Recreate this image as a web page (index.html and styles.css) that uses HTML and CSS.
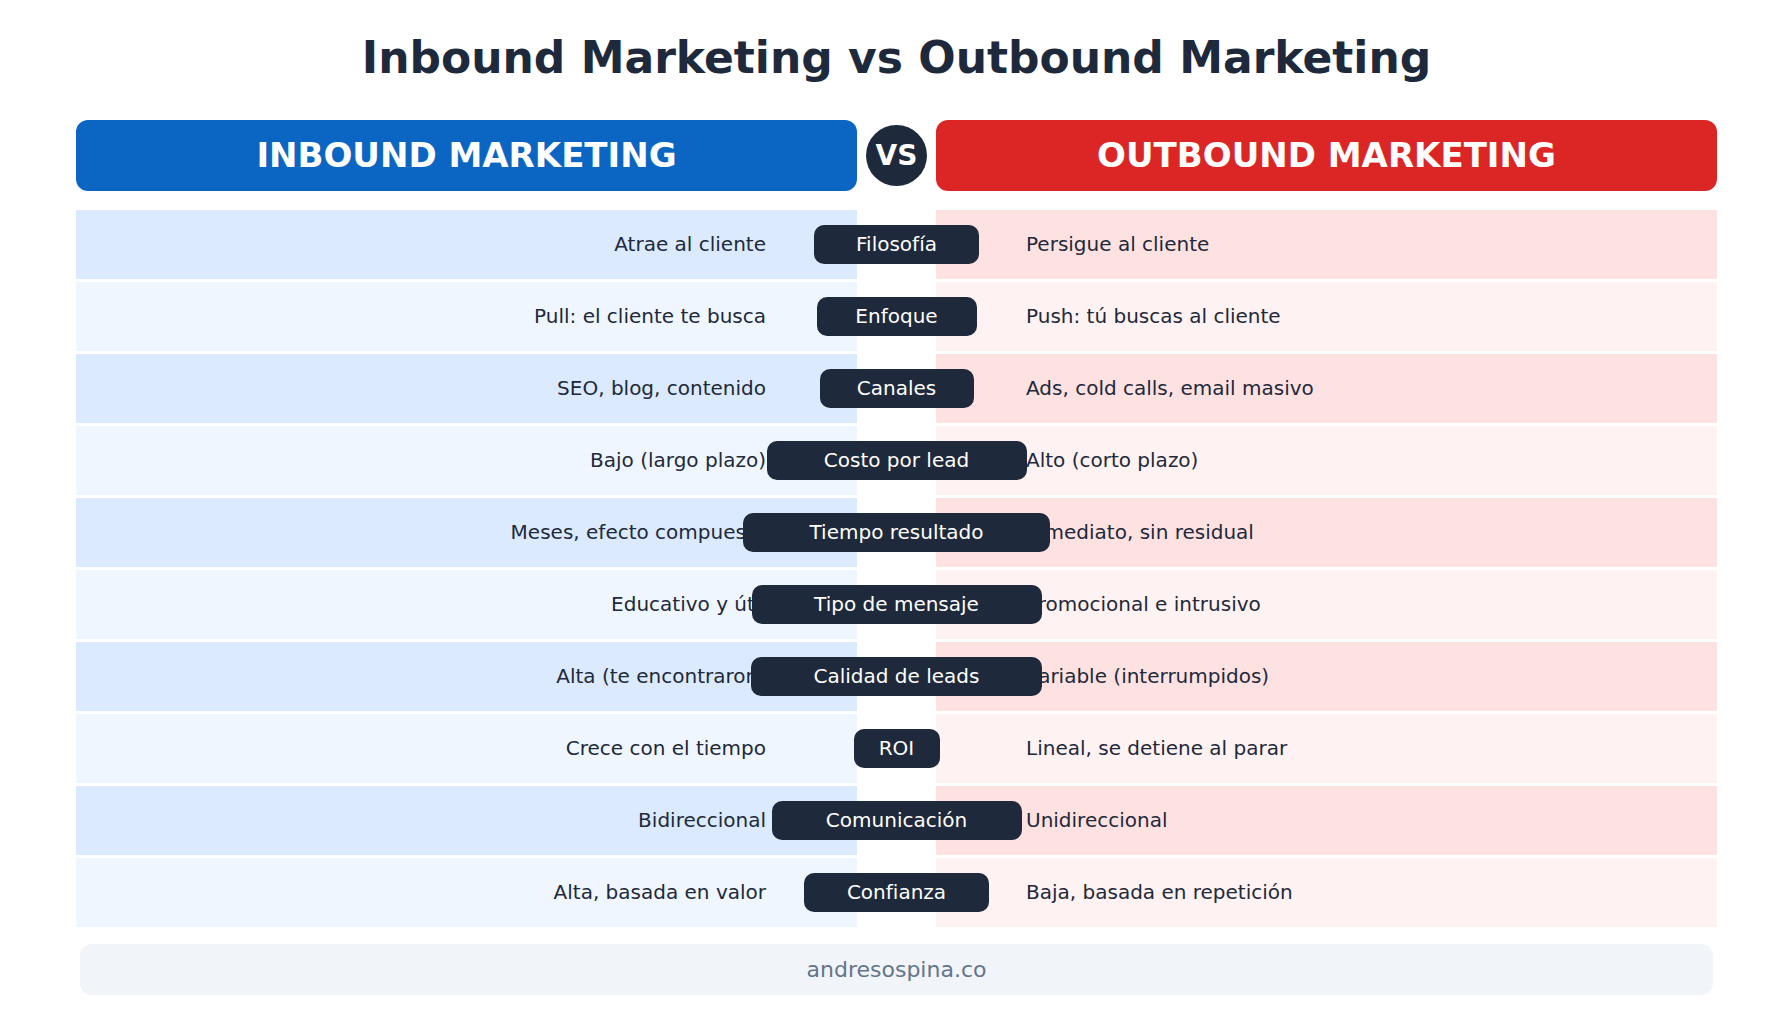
FILE: index.html
```html
<!DOCTYPE html>
<html lang="es">
<head>
<meta charset="utf-8">
<title>Inbound Marketing vs Outbound Marketing</title>
<link rel="stylesheet" href="styles.css">
</head>
<body>
<main class="page">
  <h1 class="title">Inbound Marketing vs Outbound Marketing</h1>
  <div class="board">
    <div class="head-row">
      <div class="head head-in">INBOUND MARKETING</div>
      <div class="vs-wrap"><div class="vs">VS</div></div>
      <div class="head head-out">OUTBOUND MARKETING</div>
    </div>
    <div class="rows">
      <div class="row odd">
        <div class="cell cell-in">Atrae al cliente</div>
        <div class="pill" style="width:165px">Filosofía</div>
        <div class="cell cell-out">Persigue al cliente</div>
      </div>
      <div class="row even">
        <div class="cell cell-in">Pull: el cliente te busca</div>
        <div class="pill" style="width:160px">Enfoque</div>
        <div class="cell cell-out">Push: tú buscas al cliente</div>
      </div>
      <div class="row odd">
        <div class="cell cell-in">SEO, blog, contenido</div>
        <div class="pill" style="width:154px">Canales</div>
        <div class="cell cell-out">Ads, cold calls, email masivo</div>
      </div>
      <div class="row even">
        <div class="cell cell-in">Bajo (largo plazo)</div>
        <div class="pill" style="width:260px">Costo por lead</div>
        <div class="cell cell-out">Alto (corto plazo)</div>
      </div>
      <div class="row odd">
        <div class="cell cell-in">Meses, efecto compuesto</div>
        <div class="pill" style="width:307px">Tiempo resultado</div>
        <div class="cell cell-out">Inmediato, sin residual</div>
      </div>
      <div class="row even">
        <div class="cell cell-in">Educativo y útil</div>
        <div class="pill" style="width:290px">Tipo de mensaje</div>
        <div class="cell cell-out">Promocional e intrusivo</div>
      </div>
      <div class="row odd">
        <div class="cell cell-in">Alta (te encontraron)</div>
        <div class="pill" style="width:291px">Calidad de leads</div>
        <div class="cell cell-out">Variable (interrumpidos)</div>
      </div>
      <div class="row even">
        <div class="cell cell-in">Crece con el tiempo</div>
        <div class="pill" style="width:86px">ROI</div>
        <div class="cell cell-out">Lineal, se detiene al parar</div>
      </div>
      <div class="row odd">
        <div class="cell cell-in">Bidireccional</div>
        <div class="pill" style="width:250px">Comunicación</div>
        <div class="cell cell-out">Unidireccional</div>
      </div>
      <div class="row even">
        <div class="cell cell-in">Alta, basada en valor</div>
        <div class="pill" style="width:185px">Confianza</div>
        <div class="cell cell-out">Baja, basada en repetición</div>
      </div>
    </div>
  </div>
  <footer class="footer">andresospina.co</footer>
</main>
</body>
</html>
```

FILE: styles.css
```css
* { box-sizing: border-box; }

html, body {
  margin: 0;
  padding: 0;
  background: #ffffff;
}

body {
  font-family: "DejaVu Sans", "Liberation Sans", sans-serif;
  color: #1e293b;
}

.page {
  width: 1792px;
  height: 1024px;
  padding: 32px 75px 0 76px;
  display: flex;
  flex-direction: column;
}

.title {
  margin: 0;
  font-size: 44px;
  font-weight: 700;
  line-height: normal;
  text-align: center;
  color: #1e293b;
}

.board {
  margin-top: 37px;
  display: flex;
  flex-direction: column;
  gap: 19px;
}

.head-row {
  display: grid;
  grid-template-columns: 781px 79px 781px;
  height: 71px;
}

.head {
  display: flex;
  align-items: center;
  justify-content: center;
  padding-bottom: 2px;
  border-radius: 12px;
  color: #ffffff;
  font-size: 34px;
  font-weight: 700;
}

.head-in { background: #0a66c2; }
.head-out { background: #dc2626; }

.vs-wrap {
  display: flex;
  align-items: center;
  justify-content: center;
}

.vs {
  width: 61px;
  height: 61px;
  border-radius: 50%;
  background: #1e293b;
  color: #ffffff;
  font-size: 28px;
  font-weight: 700;
  display: flex;
  align-items: center;
  justify-content: center;
}

.rows {
  display: flex;
  flex-direction: column;
  gap: 3px;
}

.row {
  display: grid;
  grid-template-columns: 781px 79px 781px;
  height: 69px;
  align-items: center;
}

.cell {
  height: 100%;
  display: flex;
  align-items: center;
  padding-bottom: 2px;
  font-size: 20px;
  color: #1e293b;
  white-space: nowrap;
  overflow: hidden;
}

.cell-in {
  justify-content: flex-end;
  padding-right: 91px;
}

.cell-out {
  padding-left: 90px;
}

.odd .cell-in { background: #dbeafe; }
.even .cell-in { background: #eff6ff; }
.odd .cell-out { background: #fee2e2; }
.even .cell-out { background: #fef2f2; }

.pill {
  position: relative;
  z-index: 1;
  justify-self: center;
  height: 39px;
  padding-bottom: 2px;
  border-radius: 10px;
  background: #1e293b;
  color: #ffffff;
  font-size: 20px;
  display: flex;
  align-items: center;
  justify-content: center;
  white-space: nowrap;
}

.footer {
  margin: 17px 4px 0 4px;
  height: 51px;
  border-radius: 12px;
  background: #f1f5f9;
  color: #64748b;
  font-size: 22px;
  display: flex;
  align-items: center;
  justify-content: center;
}
```
